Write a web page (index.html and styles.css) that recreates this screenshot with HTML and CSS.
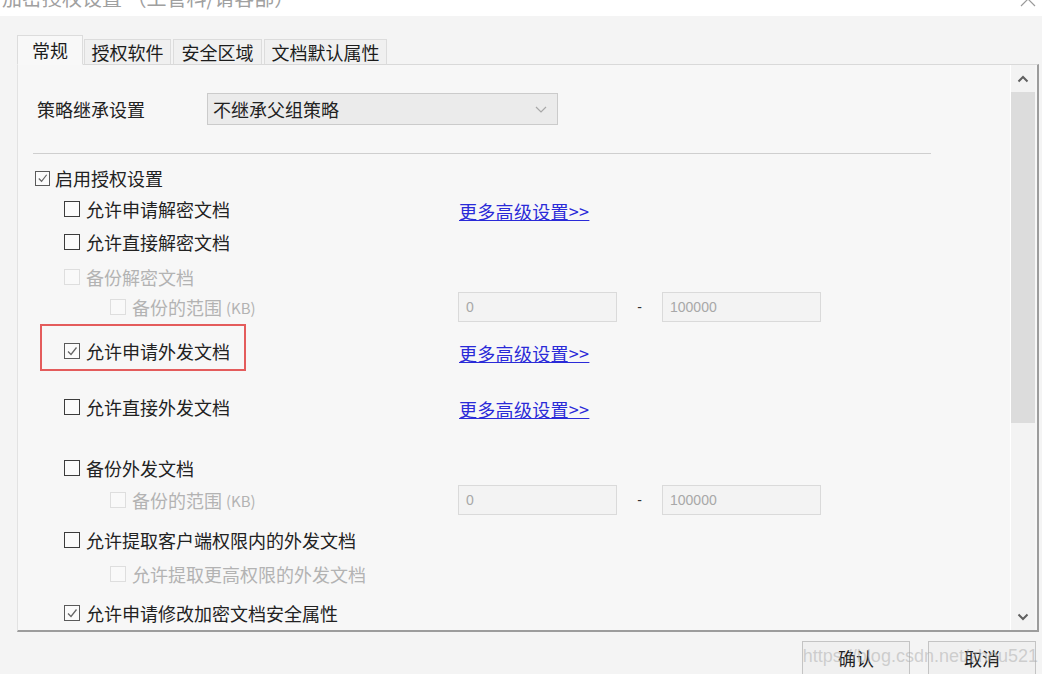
FILE: index.html
```html
<!DOCTYPE html>
<html lang="zh-CN">
<head>
<meta charset="utf-8">
<title>加密授权设置</title>
<link rel="stylesheet" href="styles.css">
</head>
<body>
<div class="titlebar">
  <span class="title">加密授权设置 （工管科/请客部）</span>
  <svg class="close" width="22" height="22" viewBox="0 0 22 22"><path d="M3 -8 L17 6 M17 -8 L3 6" stroke="#9a9a9a" stroke-width="1.2" fill="none"/></svg>
</div>
<div class="dialog">
  <div class="tabs">
    <div class="tab active">常规</div>
    <div class="tab t2">授权软件</div>
    <div class="tab t3">安全区域</div>
    <div class="tab t4">文档默认属性</div>
  </div>
  <div class="panel">
    <div class="main">
      <div class="policy">
        <span class="plabel">策略继承设置</span>
        <div class="select">
          <span>不继承父组策略</span>
          <svg width="14" height="10" viewBox="0 0 14 10"><path d="M2 3 L7 8 L12 3" stroke="#a8a8a8" stroke-width="1.2" fill="none"/></svg>
        </div>
      </div>
      <div class="rule"></div>
      <div class="rows">
        <div class="row"><label class="cb lv0"><span class="box checked"><svg viewBox="0 0 14 14"><path d="M3 7.5 L6 10.5 L11.5 3.5" stroke="#666" stroke-width="1.3" fill="none"/></svg></span>启用授权设置</label><span></span></div>
        <div class="row"><label class="cb lv1"><span class="box"></span>允许申请解密文档</label><a class="link">更多高级设置&gt;&gt;</a></div>
        <div class="row"><label class="cb lv1"><span class="box"></span>允许直接解密文档</label><span></span></div>
        <div class="row"><label class="cb lv1 dis"><span class="box"></span>备份解密文档</label><span></span></div>
        <div class="row"><label class="cb lv2 dis"><span class="box"></span>备份的范围 <small>(KB)</small></label>
          <div class="range"><span class="input">0</span><span class="dash">-</span><span class="input">100000</span></div></div>
        <div class="row"><label class="cb lv1 marked"><span class="box checked"><svg viewBox="0 0 14 14"><path d="M3 7.5 L6 10.5 L11.5 3.5" stroke="#666" stroke-width="1.3" fill="none"/></svg></span>允许申请外发文档<span class="redbox"></span></label><a class="link">更多高级设置&gt;&gt;</a></div>
        <div class="row"><label class="cb lv1"><span class="box"></span>允许直接外发文档</label><a class="link">更多高级设置&gt;&gt;</a></div>
        <div class="row"><label class="cb lv1"><span class="box"></span>备份外发文档</label><span></span></div>
        <div class="row"><label class="cb lv2 dis"><span class="box"></span>备份的范围 <small>(KB)</small></label>
          <div class="range"><span class="input">0</span><span class="dash">-</span><span class="input">100000</span></div></div>
        <div class="row"><label class="cb lv1"><span class="box"></span>允许提取客户端权限内的外发文档</label><span></span></div>
        <div class="row"><label class="cb lv2 dis"><span class="box"></span>允许提取更高权限的外发文档</label><span></span></div>
        <div class="row"><label class="cb lv1"><span class="box checked"><svg viewBox="0 0 14 14"><path d="M3 7.5 L6 10.5 L11.5 3.5" stroke="#666" stroke-width="1.3" fill="none"/></svg></span>允许申请修改加密文档安全属性</label><span></span></div>
      </div>
    </div>
    <div class="scrollbar">
      <div class="arrow"><svg width="14" height="10" viewBox="0 0 14 10"><path d="M2.5 7.5 L7 3 L11.5 7.5" stroke="#606060" stroke-width="2" fill="none"/></svg></div>
      <div class="thumb"></div>
      <div class="track"></div>
      <div class="arrow"><svg width="14" height="10" viewBox="0 0 14 10"><path d="M2.5 2.5 L7 7 L11.5 2.5" stroke="#606060" stroke-width="2" fill="none"/></svg></div>
    </div>
  </div>
  <div class="buttons">
    <button class="btn">确认</button>
    <button class="btn">取消</button>
    <span class="watermark">https://blog.csdn.net/zhou521</span>
  </div>
</div>
</body>
</html>
```

FILE: styles.css
```css
* { box-sizing: border-box; }
html, body { margin: 0; padding: 0; }
body {
  width: 1048px;
  height: 674px;
  overflow: hidden;
  background: #ffffff;
  font-family: "Noto Sans CJK SC", "Microsoft YaHei", sans-serif;
  color: #222;
}
.titlebar {
  position: relative;
  height: 16px;
  overflow: hidden;
  background: #fff;
}
.title {
  display: block;
  margin-top: -15px;
  padding-left: 2px;
  font-size: 20px;
  line-height: 26px;
  color: #a0a0a0;
  white-space: nowrap;
}
.close {
  position: absolute;
  right: 8px;
  top: 0;
}
.dialog {
  position: relative;
  width: 1042px;
  height: 658px;
  background: #f4f4f4;
  padding: 19px 0 0 17px;
}
.tabs {
  display: flex;
  align-items: flex-end;
  height: 30px;
  position: relative;
  z-index: 2;
  margin-bottom: -1px;
}
.tab {
  height: 26px;
  margin-left: 1px;
  font-size: 18px;
  line-height: 25px;
  background: #f0f0f0;
  border: 1px solid #dcdcdc;
  border-bottom: 1px solid #d9d9d9;
  color: #1c1c1c;
  white-space: nowrap;
  text-align: center;
  padding: 0;
}
.tab.active {
  height: 30px;
  margin-left: 0;
  width: 66px;
  line-height: 28px;
  background: #f8f8f8;
  border-bottom-color: #f8f8f8;
}
.tab.t2 { width: 87px; }
.tab.t3 { width: 89px; margin-left: 2px; }
.tab.t4 { width: 123px; margin-left: 2px; }
.panel {
  display: flex;
  width: 1022px;
  height: 568px;
  background: #f7f7f7;
  border-top: 1px solid #d9d9d9;
  border-left: 1px solid #e2e2e2;
  border-right: 2px solid #9c9c9c;
  border-bottom: 2px solid #9c9c9c;
  overflow: hidden;
}
.main {
  flex: 1;
  padding-left: 17px;
}
.policy {
  display: flex;
  align-items: center;
  margin-top: 28px;
  margin-left: 2px;
  height: 32px;
}
.plabel {
  width: 170px;
  font-size: 18px;
}
.select {
  display: flex;
  align-items: center;
  justify-content: space-between;
  width: 351px;
  height: 32px;
  padding: 0 5px 0 5px;
  background: #ebebeb;
  border: 1px solid #cbcbcb;
  font-size: 18px;
}
.select svg { margin-right: 4px; }
.rule {
  width: 898px;
  height: 1px;
  background: #cfcfcf;
  margin: 28px 0 0 -2px;
}
.rows {
  display: grid;
  grid-template-columns: 424px auto;
  grid-template-rows: 31px 33px 35px 30px 44px 56px 61px 32px 40px 34px 39px 30px;
  align-items: start;
  margin-top: 9px;
}
.row {
  display: contents;
}
.cb {
  position: relative;
  display: flex;
  align-items: center;
  height: 30px;
  font-size: 18px;
  white-space: nowrap;
  color: #222;
}
.cb small { font-size: 15px; margin-left: 4px; }
.lv0 { padding-left: 0; }
.lv1 { padding-left: 29px; }
.lv2 { padding-left: 75px; }
.box {
  display: inline-flex;
  align-items: center;
  justify-content: center;
  width: 16px;
  height: 16px;
  margin-right: 6px;
  border: 1px solid #3c3c3c;
  background: #fbfbfb;
}
.lv0 .box { width: 15px; height: 15px; margin-right: 5px; border-color: #555; }
.box svg { width: 14px; height: 14px; }
.box.checked { border-color: #5a5a5a; }
.dis { color: #b3b3b3; }
.dis .box { border-color: #dedede; background: #f9f9f9; }
.redbox {
  position: absolute;
  left: 5px;
  top: -12px;
  width: 206px;
  height: 47px;
  border: 2px solid #e45c5c;
}
.link {
  display: flex;
  align-items: center;
  height: 30px;
  padding-top: 3px;
  font-size: 18px;
  letter-spacing: 0.3px;
  color: #2a2ad8;
  text-decoration: underline;
  text-decoration-color: #2a2ad8;
  white-space: nowrap;
}
.range {
  display: flex;
  align-items: center;
  height: 30px;
  margin-left: -1px;
}
.input {
  display: flex;
  align-items: center;
  width: 159px;
  height: 30px;
  padding-left: 7px;
  background: #f3f3f3;
  border: 1px solid #dadada;
  font-family: "Liberation Sans", Arial, sans-serif;
  font-size: 14px;
  color: #a8a8a8;
}
.dash {
  width: 45px;
  text-align: center;
  font-family: "Liberation Sans", Arial, sans-serif;
  font-size: 14px;
  color: #333;
}
.scrollbar {
  display: flex;
  flex-direction: column;
  width: 25px;
  margin-right: 2px;
  border-left: 1px solid #ffffff;
  background: #f3f3f3;
}
.arrow {
  display: flex;
  align-items: center;
  justify-content: center;
  height: 27px;
}
.thumb {
  height: 331px;
  background: #dcdcdc;
}
.track { flex: 1; }
.buttons {
  position: relative;
  display: flex;
  justify-content: flex-end;
  gap: 18px;
  padding-right: 6px;
  margin-top: 9px;
}
.btn {
  width: 108px;
  height: 34px;
  background: #f0f0f0;
  border: 1px solid #c4c4c4;
  font-family: "Noto Sans CJK SC", sans-serif;
  font-size: 18px;
  color: #222;
  padding: 0;
}
.watermark {
  position: absolute;
  right: 4px;
  top: 5px;
  font-family: "Liberation Sans", Arial, sans-serif;
  font-size: 18px;
  color: rgba(170, 170, 170, 0.5);
  white-space: nowrap;
  pointer-events: none;
}
```
